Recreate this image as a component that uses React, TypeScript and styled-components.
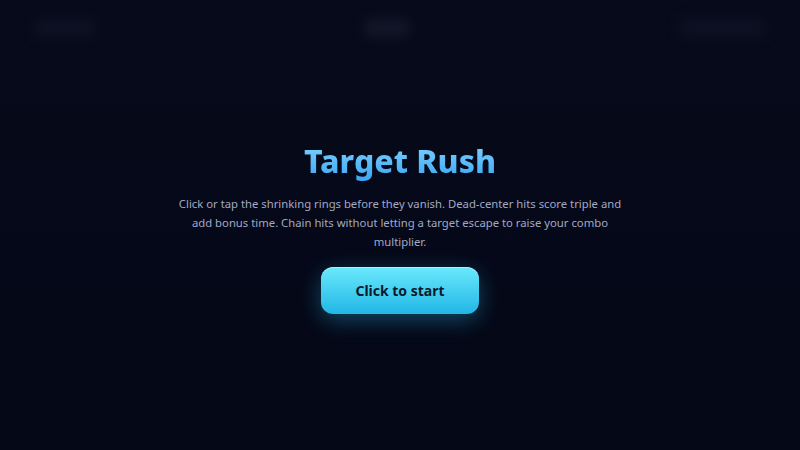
import styled, { createGlobalStyle } from 'styled-components';

const GlobalStyle = createGlobalStyle`
  * { box-sizing: border-box; }
  html, body, #root { margin: 0; height: 100%; }
  body {
    background: #060a1a;
    font-family: "Noto Sans", sans-serif;
  }
`;

const Stage = styled.div`
  position: relative;
  width: 100%;
  height: 100%;
  overflow: hidden;
  background: linear-gradient(180deg, #070b1c 0%, #050817 100%);
`;

const Hud = styled.div`
  display: flex;
  justify-content: space-between;
  align-items: center;
  padding: 18px 34px;
  filter: blur(6px);
  opacity: 0.5;
`;

type ChipProps = { $w: number; $tone: string };

const Chip = styled.div<ChipProps>`
  width: ${({ $w }) => $w}px;
  height: 20px;
  border-radius: 6px;
  background: ${({ $tone }) => $tone};
`;

const Overlay = styled.div`
  position: absolute;
  inset: 0;
  display: flex;
  flex-direction: column;
  align-items: center;
  justify-content: center;
  padding-top: 6px;
  background: rgba(5, 8, 22, 0.35);
`;

const Title = styled.h1`
  margin: 0 0 13px;
  font-size: 32px;
  font-weight: 800;
  line-height: 1.2;
  background: linear-gradient(180deg, #80d2ff 0%, #3aa6f4 100%);
  -webkit-background-clip: text;
  background-clip: text;
  color: transparent;
`;

const Blurb = styled.p`
  margin: 0 0 16px;
  max-width: 448px;
  font-size: 11.3px;
  line-height: 19px;
  text-align: center;
  color: #a1a9c4;
`;

const StartButton = styled.button`
  width: 158px;
  height: 47px;
  border: none;
  border-radius: 12px;
  font-family: "Noto Sans", sans-serif;
  font-size: 14px;
  font-weight: 700;
  color: #0a1a2b;
  background: linear-gradient(180deg, #6ae9fd 0%, #21b6e6 100%);
  box-shadow: 0 6px 22px rgba(34, 190, 240, 0.35), inset 0 1px 0 rgba(255, 255, 255, 0.4);
  cursor: pointer;
`;

export default function App() {
  return (
    <>
      <GlobalStyle />
      <Stage>
        <Hud>
          <Chip $w={62} $tone="#1a2338" />
          <Chip $w={46} $tone="#2a3146" />
          <Chip $w={88} $tone="#172236" />
        </Hud>
        <Overlay>
          <Title>Target Rush</Title>
          <Blurb>
            Click or tap the shrinking rings before they vanish. Dead-center hits score triple and
            add bonus time. Chain hits without letting a target escape to raise your combo
            multiplier.
          </Blurb>
          <StartButton>Click to start</StartButton>
        </Overlay>
      </Stage>
    </>
  );
}
